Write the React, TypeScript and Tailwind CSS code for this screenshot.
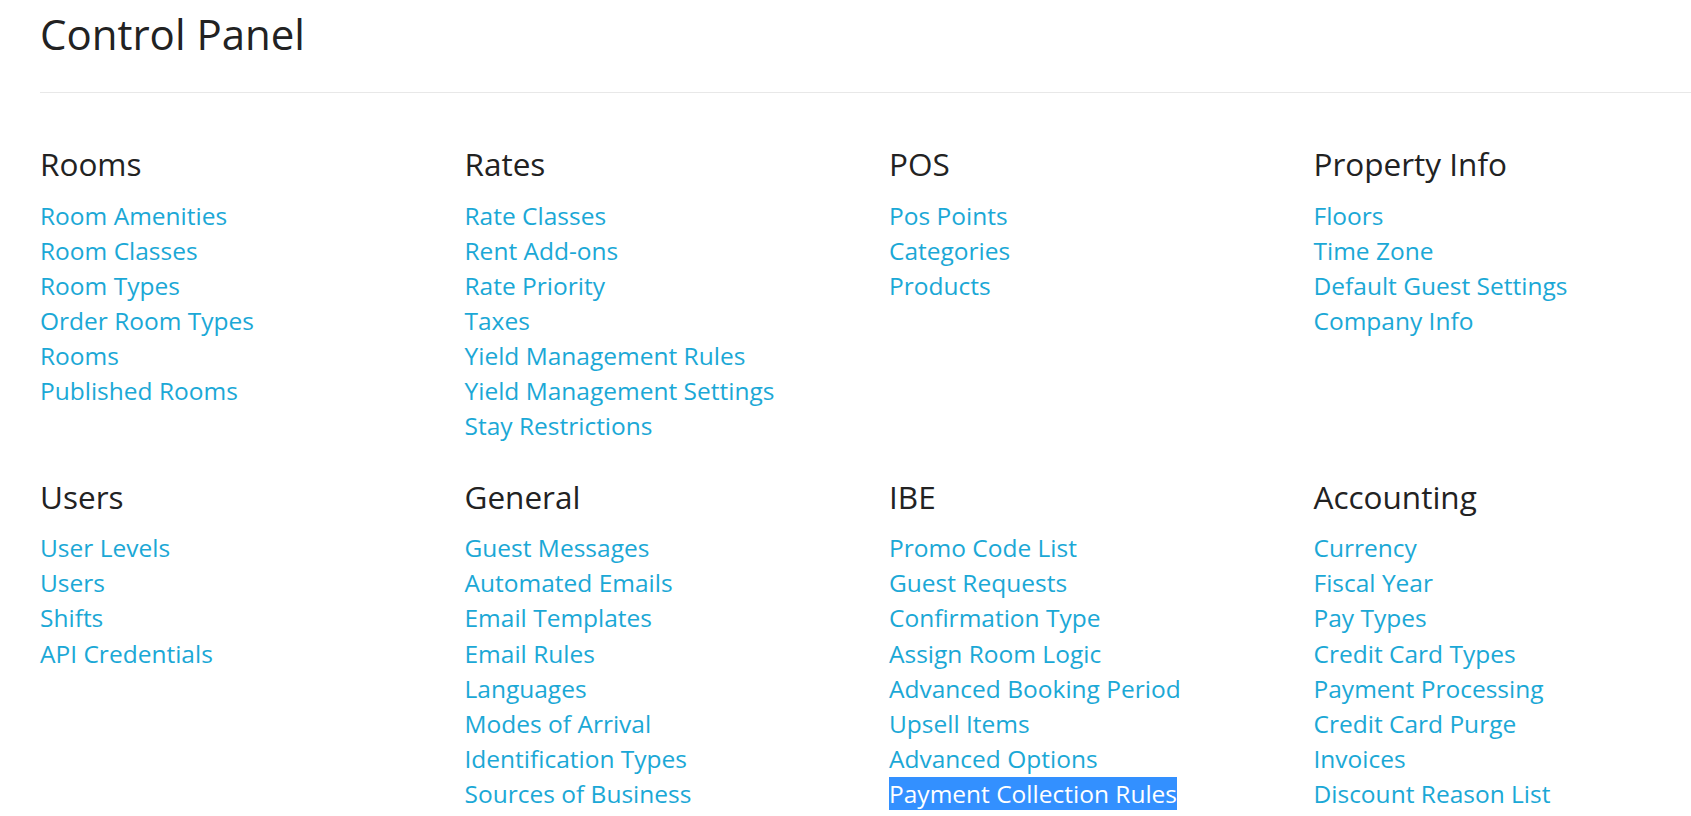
const sections = [
  {
    title: "Rooms",
    links: [
      "Room Amenities",
      "Room Classes",
      "Room Types",
      "Order Room Types",
      "Rooms",
      "Published Rooms",
    ],
  },
  {
    title: "Rates",
    links: [
      "Rate Classes",
      "Rent Add-ons",
      "Rate Priority",
      "Taxes",
      "Yield Management Rules",
      "Yield Management Settings",
      "Stay Restrictions",
    ],
  },
  {
    title: "POS",
    links: ["Pos Points", "Categories", "Products"],
  },
  {
    title: "Property Info",
    links: ["Floors", "Time Zone", "Default Guest Settings", "Company Info"],
  },
  {
    title: "Users",
    links: ["User Levels", "Users", "Shifts", "API Credentials"],
  },
  {
    title: "General",
    links: [
      "Guest Messages",
      "Automated Emails",
      "Email Templates",
      "Email Rules",
      "Languages",
      "Modes of Arrival",
      "Identification Types",
      "Sources of Business",
    ],
  },
  {
    title: "IBE",
    links: [
      "Promo Code List",
      "Guest Requests",
      "Confirmation Type",
      "Assign Room Logic",
      "Advanced Booking Period",
      "Upsell Items",
      "Advanced Options",
      "Payment Collection Rules",
    ],
  },
  {
    title: "Accounting",
    links: [
      "Currency",
      "Fiscal Year",
      "Pay Types",
      "Credit Card Types",
      "Payment Processing",
      "Credit Card Purge",
      "Invoices",
      "Discount Reason List",
    ],
  },
];

const Section = ({ title, links }: { title: string; links: string[] }) => {
  return (
    <div className="mb-[35px]">
      <h3 className="text-[31.5px] leading-[36px] text-[#222] mb-[15.5px]">{title}</h3>
      <ul>
        {links.map((link) => (
          <li key={link} className="text-[24.5px] leading-[35.15px]">
            <a
              href="#"
              className={
                link === "Payment Collection Rules"
                  ? "bg-[#3390ff] text-white"
                  : "text-[#1ba8d6]"
              }
            >
              {link}
            </a>
          </li>
        ))}
      </ul>
    </div>
  );
};

const App = () => {
  return (
    <div
      className="min-h-screen bg-white overflow-hidden"
      style={{ fontFamily: '"Open Sans", "Liberation Sans", sans-serif' }}
    >
      <div className="pl-[40px]">
        <h1 className="pt-[9px] text-[42px] leading-[50px] text-[#222]">Control Panel</h1>
        <div className="mt-[33px] h-px bg-[#e8e8e8]" />
        <div className="mt-[53px] grid grid-cols-[repeat(4,424.5px)]">
          {sections.map((s) => (
            <Section key={s.title} title={s.title} links={s.links} />
          ))}
        </div>
      </div>
    </div>
  );
};

export default App;
